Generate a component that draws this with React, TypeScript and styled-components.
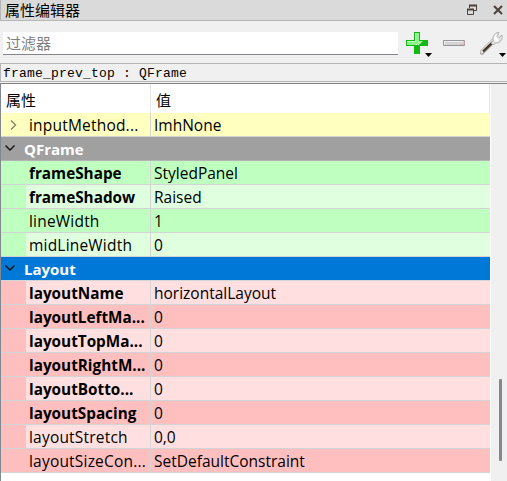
import React from "react";
import styled, { createGlobalStyle } from "styled-components";

const GlobalStyle = createGlobalStyle`
  * { box-sizing: border-box; }
  body { margin: 0; background: #f0f0f0; overflow: hidden; }
`;

const Panel = styled.main`
  width: 507px;
  height: 481px;
  display: flex;
  flex-direction: column;
  background: #f0f0f0;
  color: #000;
  font-family: "Open Sans", "Noto Sans CJK SC", sans-serif;
  font-size: 15px;
  overflow: hidden;
  white-space: pre;
`;

const TitleBar = styled.header`
  height: 21px;
  flex: none;
  display: flex;
  align-items: center;
  padding: 0 3px 0 5px;
  background: #dadada;
  border-bottom: 1px solid #b5b5b5;
  border-left: 1px solid #b5b5b5;
  font: 15px/20px "Noto Sans CJK SC", sans-serif;
`;

const Title = styled.h1`
  flex: 1;
  margin: 0;
  font: inherit;
  margin-left: -1px;
`;

const TitleButton = styled.button`
  width: 12px;
  height: 12px;
  padding: 0;
  border: 0;
  background: none;
  margin-left: 14px;
  svg { display: block; }
`;

const Toolbar = styled.div`
  height: 42px;
  flex: none;
  display: flex;
  align-items: flex-start;
  padding: 11px 0 0 3px;
`;

const Filter = styled.input`
  width: 395px;
  height: 23px;
  flex: none;
  padding: 0 0 1px 3px;
  border: 0;
  border-bottom: 1px solid #83838b;
  border-radius: 0;
  background: #fff;
  outline: none;
  font: 15px/22px "Noto Sans CJK SC", sans-serif;
  &::placeholder { color: #808080; opacity: 1; }
`;

const ToolButton = styled.button<{ $gap: number; $width: number }>`
  width: ${(p) => p.$width}px;
  height: 28px;
  flex: none;
  margin-left: ${(p) => p.$gap}px;
  padding: 0;
  border: 0;
  background: none;
  svg { display: block; }
`;

const ObjectLabel = styled.div`
  height: 19px;
  flex: none;
  padding-left: 2px;
  border: 1px solid #b5b5b5;
  border-right: 0;
  font: 13px/19px "Liberation Mono", monospace;
  letter-spacing: 0.2px;
`;

const TreeFrame = styled.div`
  height: 398px;
  flex: none;
  margin-top: 1px;
  display: flex;
  border-top: 1px solid #828282;
  border-left: 1px solid #828790;
`;

const Tree = styled.div`
  width: 490px;
  background: #fff;
`;

const HeaderRow = styled.div`
  height: 29px;
  width: 489px;
  display: grid;
  grid-template-columns: 150px 1fr;
  border-right: 1px solid #e5e5e5;
  font: 15px/31px "Noto Sans CJK SC", sans-serif;
`;

const HeaderCell = styled.div`
  padding-left: 5px;
  border-right: 1px solid #e5e5e5;
  &:last-child { border: 0; }
`;

const Row = styled.div<{ $bg: string; $indent: string }>`
  width: 489px;
  height: 24px;
  display: grid;
  grid-template-columns: 25px 125px 1fr;
  line-height: 24px;
  background: linear-gradient(90deg, ${(p) => p.$indent} 25px, ${(p) => p.$bg} 25px);
  border-bottom: 1px solid #d4d4d4;
`;

const Name = styled.span<{ $bold?: boolean }>`
  height: 23px;
  padding-left: 3px;
  border-right: 1px solid #d4d4d4;
  font-size: ${(p) => (p.$bold ? 15.3 : 15.5)}px;
  font-weight: ${(p) => (p.$bold ? 700 : 400)};
  letter-spacing: ${(p) => (p.$bold ? 0 : 0.2)}px;
`;

const Value = styled.span`
  height: 23px;
  padding-left: 3px;
  font-size: 15.5px;
`;

const GroupRow = styled.div<{ $bg: string; $line: string }>`
  width: 489px;
  height: 24px;
  display: flex;
  background: ${(p) => p.$bg};
  border-bottom: 1px solid ${(p) => p.$line};
  color: #fff;
  font-weight: 700;
  line-height: 24px;
`;

const Marker = styled.span<{ $left: number; $top: number }>`
  width: 23px;
  padding: ${(p) => p.$top}px 0 0 ${(p) => p.$left}px;
  svg { display: block; }
`;

const ScrollBar = styled.div`
  width: 16px;
  background: #f0f0f0;
  padding: 295px 0 0 8px;
`;

const Thumb = styled.div`
  width: 3px;
  height: 82px;
  border-radius: 1px;
  background: #85878c;
`;

type Prop = { name: string; value: string; bold?: boolean };

const frameProps: Prop[] = [
  { name: "frameShape", value: "StyledPanel", bold: true },
  { name: "frameShadow", value: "Raised", bold: true },
  { name: "lineWidth", value: "1" },
  { name: "midLineWidth", value: "0" },
];

const layoutProps: Prop[] = [
  { name: "layoutName", value: "horizontalLayout", bold: true },
  { name: "layoutLeftMa...", value: "0", bold: true },
  { name: "layoutTopMa...", value: "0", bold: true },
  { name: "layoutRightM...", value: "0", bold: true },
  { name: "layoutBotto...", value: "0", bold: true },
  { name: "layoutSpacing", value: "0", bold: true },
  { name: "layoutStretch", value: "0,0" },
  { name: "layoutSizeCon...", value: "SetDefaultConstraint" },
];

const PropertyRow = ({ item, bg, indent }: { item: Prop; bg: string; indent: string }) => (
  <Row $bg={bg} $indent={indent}>
    <span />
    <Name $bold={item.bold}>{item.name}</Name>
    <Value>{item.value}</Value>
  </Row>
);

const OpenMark = () => (
  <Marker $left={4} $top={7}>
    <svg width="10" height="8" viewBox="0 0 10 8" fill="none" stroke="#111" strokeWidth="1.4">
      <path d="M.5 1.5 5 6l4.500-4.500" />
    </svg>
  </Marker>
);

const RestoreIcon = () => (
  <svg width="12" height="12" viewBox="0 0 12 12" fill="none" stroke="#4c4038">
    <path d="M3.500 4V1.500h7v5H8" />
    <path d="M3 1.500h8" strokeWidth="2" />
    <path d="M1.500 5.500h6v5h-6z" fill="#dadada" />
    <path d="M1 5.500h7" strokeWidth="2" />
  </svg>
);

const CloseIcon = () => (
  <svg width="12" height="12" viewBox="0 0 12 12" fill="none" stroke="#4c4038" strokeWidth="2">
    <path d="m2 2 8 8M10 2l-8 8" />
  </svg>
);

const PlusIcon = () => (
  <svg width="28" height="28" viewBox="0 0 28 28">
    <path d="M8 0h6v8h8v6h-8v8H8v-8H0V8h8z" fill="#12b912" />
    <path d="M9 1h4v8h4l-4 4H1V9h8z" fill="#8bf58b" />
    <path d="M9 1h1v9H1V9h8z" fill="#c8ffc8" />
    <path d="m10 13 3-3m-1 3 3-3" stroke="#e0ffd8" strokeWidth=".7" />
    <path d="M19 21h7l-3.500 4z" fill="#000" />
  </svg>
);

const MinusIcon = () => (
  <svg width="22" height="28" viewBox="0 0 22 28">
    <path d="M.5 8.500h21v5H.5z" fill="#d5d3d4" stroke="#96949a" />
    <path d="M1 9.500h19M1.500 9v4" stroke="#efeff0" />
    <path d="M17 12.500h4v-3" fill="none" stroke="#e5b8b8" />
  </svg>
);

const WrenchIcon = () => (
  <svg width="27" height="28" viewBox="0 0 27 28">
    <path d="M1.800 20.500 14 8.500" stroke="#a3a29f" strokeWidth="4.600" strokeLinecap="round" />
    <path d="M1.800 19.800 13 8.500" stroke="#f1f1ef" strokeWidth="2.400" strokeLinecap="round" />
    <path d="M3 19.500 12.500 10.300" stroke="#40352b" strokeWidth="2.300" />
    <path d="M13 9c-1-4 1-8 6-9l-1.500 4L19 5.500 22 3c1 5-2 8-6 8l-3 2-2-2z" fill="#dededd" stroke="#aaa" strokeWidth=".8" />
    <path d="m14 6 1-3 2-1-1 3 3 3-2 2-3-1z" fill="#fff" />
    <circle cx="1.800" cy="20.500" r="1" fill="#eee" />
    <path d="M19 21h7l-3.500 4z" fill="#000" />
  </svg>
);

export default function App() {
  return (
    <>
      <GlobalStyle />
      <Panel>
        <TitleBar>
          <Title>属性编辑器</Title>
          <TitleButton aria-label="还原"><RestoreIcon /></TitleButton>
          <TitleButton aria-label="关闭"><CloseIcon /></TitleButton>
        </TitleBar>
        <Toolbar>
          <Filter placeholder="过滤器" />
          <ToolButton $gap={8} $width={28}><PlusIcon /></ToolButton>
          <ToolButton $gap={9} $width={22}><MinusIcon /></ToolButton>
          <ToolButton $gap={15} $width={27}><WrenchIcon /></ToolButton>
        </Toolbar>
        <ObjectLabel>frame_prev_top : QFrame</ObjectLabel>
        <TreeFrame>
          <Tree>
            <HeaderRow>
              <HeaderCell>属性</HeaderCell>
              <HeaderCell>值</HeaderCell>
            </HeaderRow>
            <Row $bg="#ffffbf" $indent="#ffffbf">
              <Marker $left={9} $top={7}>
                <svg width="7" height="10" viewBox="0 0 7 10" fill="none" stroke="#858570" strokeWidth="1.400">
                  <path d="m1 .5 4.500 4.500L1 9.500" />
                </svg>
              </Marker>
              <Name>inputMethod...</Name>
              <Value>ImhNone</Value>
            </Row>
            <GroupRow $bg="#a0a0a0" $line="#b4b4b4"><OpenMark />QFrame</GroupRow>
            {frameProps.map((item, i) => (
              <PropertyRow key={item.name} item={item} indent="#bfffbf" bg={i % 2 ? "#dfffdf" : "#bfffbf"} />
            ))}
            <GroupRow $bg="#0078d7" $line="#d4d4d4"><OpenMark />Layout</GroupRow>
            {layoutProps.map((item, i) => (
              <PropertyRow key={item.name} item={item} indent="#ffbfbf" bg={i % 2 ? "#ffbfbf" : "#ffdfdf"} />
            ))}
          </Tree>
          <ScrollBar><Thumb /></ScrollBar>
        </TreeFrame>
      </Panel>
    </>
  );
}
